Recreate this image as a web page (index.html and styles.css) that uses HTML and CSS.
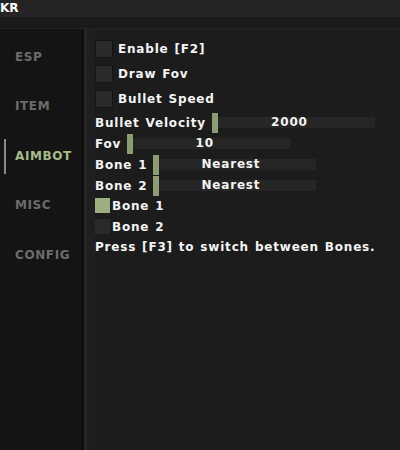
FILE: index.html
```html
<!DOCTYPE html>
<html lang="en">
<head>
    <meta charset="UTF-8">
    <title>KR</title>
    <link rel="stylesheet" href="styles.css">
</head>
<body>
    <div class="titlebar">KR</div>
    <div class="band"></div>
    <div class="window">
        <div class="sidebar">
            <div class="tab">ESP</div>
            <div class="tab">ITEM</div>
            <div class="tab active">AIMBOT</div>
            <div class="tab">MISC</div>
            <div class="tab">CONFIG</div>
        </div>
        <div class="divider"></div>
        <div class="content">
            <div class="checks">
                <div class="check-row"><span class="box"></span>Enable [F2]</div>
                <div class="check-row"><span class="box"></span>Draw Fov</div>
                <div class="check-row"><span class="box"></span>Bullet Speed</div>
            </div>
            <div class="sliders">
                <div class="slider-row">Bullet Velocity<div class="slider"><span class="grab"></span><span class="track">2000</span></div></div>
                <div class="slider-row">Fov<div class="slider"><span class="grab"></span><span class="track">10</span></div></div>
                <div class="slider-row">Bone 1<div class="slider"><span class="grab"></span><span class="track">Nearest</span></div></div>
                <div class="slider-row">Bone 2<div class="slider"><span class="grab"></span><span class="track">Nearest</span></div></div>
            </div>
            <div class="bones">
                <div class="bone-row"><span class="small-box on"></span>Bone 1</div>
                <div class="bone-row"><span class="small-box"></span>Bone 2</div>
            </div>
            <div class="hint">Press [F3] to switch between Bones.</div>
        </div>
    </div>
</body>
</html>
```

FILE: styles.css
```css
html, body { margin: 0; height: 100%; }
body { background: #1c1c1c; color: #f4f4f4; font-family: 'DejaVu Sans', Verdana, sans-serif; font-weight: bold; font-size: 12px; letter-spacing: 0.8px; word-spacing: 1px; display: flex; flex-direction: column; overflow: hidden; }
.titlebar { height: 17px; line-height: 17px; background: #242424; color: #fff; font-size: 12px; letter-spacing: 0; }
.band { height: 11px; background: #1a1a1a; border-bottom: 1px solid #232323; }
.window { flex: 1; display: flex; }
.sidebar { width: 81px; background: #141414; padding-top: 4px; display: flex; flex-direction: column; }
.tab { position: relative; height: 49.4px; line-height: 49px; padding-left: 15px; color: #6c6c6c; letter-spacing: 0.6px; }
.tab.active { color: #a6ba8a; }
.tab.active::before { content: ""; position: absolute; left: 4px; top: 7px; bottom: 7px; width: 2px; background: #8a8a8a; }
.divider { width: 3px; background: #0e0e0e; border-right: 3px solid #262626; }
.content { flex: 1; padding: 11px 0 0 8px; background: linear-gradient(to right, #1f1f1f 8px, #1c1c1c 8px); }
.checks { display: flex; flex-direction: column; gap: 7px; }
.check-row { height: 18px; display: flex; align-items: center; gap: 5px; }
.box { width: 16px; height: 16px; background: #2b2b2b; border: 1px solid #141414; }
.sliders { margin-top: 4px; }
.slider-row { height: 21px; display: flex; align-items: center; gap: 6px; }
.slider { width: 163px; display: flex; align-items: center; }
.grab { width: 6px; height: 20px; background: #8e9c74; }
.track { flex: 1; height: 11px; line-height: 11px; background: #262626; text-align: center; padding-right: 14px; }
.bones { margin-top: 1px; display: flex; flex-direction: column; gap: 4px; }
.bone-row { height: 17px; display: flex; align-items: center; gap: 2px; }
.small-box { width: 15px; height: 15px; background: #2a2a2a; }
.small-box.on { background: #9bae7d; }
.hint { margin-top: 4px; height: 16px; line-height: 16px; }
```
